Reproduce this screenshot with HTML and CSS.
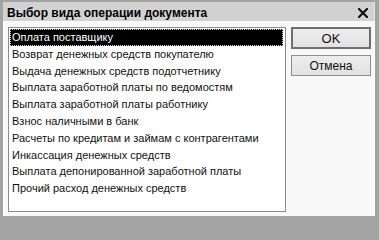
FILE: index.html
```html
<!DOCTYPE html>
<html lang="ru">
<head>
<meta charset="utf-8">
<title>Выбор вида операции документа</title>
<link rel="stylesheet" href="styles.css">
</head>
<body>
<div class="window">
  <div class="titlebar">
    <span class="title">Выбор вида операции документа</span>
    <svg class="close" width="10" height="10" viewBox="0 0 10 10"><path d="M1 1 L9 9 M9 1 L1 9" stroke="#111" stroke-width="2.2" stroke-linecap="square"/></svg>
  </div>
  <div class="content">
    <ul class="list">
      <li class="item selected">Оплата поставщику</li>
      <li class="item">Возврат денежных средств покупателю</li>
      <li class="item">Выдача денежных средств подотчетнику</li>
      <li class="item">Выплата заработной платы по ведомостям</li>
      <li class="item">Выплата заработной платы работнику</li>
      <li class="item">Взнос наличными в банк</li>
      <li class="item">Расчеты по кредитам и займам с контрагентами</li>
      <li class="item">Инкассация денежных средств</li>
      <li class="item">Выплата депонированной заработной платы</li>
      <li class="item">Прочий расход денежных средств</li>
    </ul>
    <div class="buttons">
      <button class="btn default">OK</button>
      <button class="btn">Отмена</button>
    </div>
  </div>
</div>
</body>
</html>
```
FILE: styles.css
```css
html, body {
  margin: 0;
  padding: 0;
  background: #a3a3a3;
}
.window {
  width: 379px;
  height: 221px;
  box-sizing: border-box;
  background: #a3a3a3;
  padding: 2px 4px 5px 3px;
  display: flex;
  flex-direction: column;
  font-family: "Liberation Sans", Arial, sans-serif;
}
.titlebar {
  height: 19px;
  flex: none;
  background: #d2d2d2;
  display: flex;
  align-items: center;
  justify-content: space-between;
  padding: 0 6px 0 4px;
  border-right: 1px solid #e6e6e6;
}
.title {
  font-weight: bold;
  font-size: 12px;
  color: #000;
  padding-top: 2px;
}
.close {
  display: block;
  margin-top: 2px;
}
.content {
  flex: 1;
  background: #f8f8f8;
  border-left: 1px solid #fcfcfc;
  border-right: 1px solid #fcfcfc;
  display: flex;
  align-items: flex-start;
  padding: 6px 4px 0 4px;
  gap: 5px;
}
.list {
  list-style: none;
  margin: 0;
  padding: 1px 1px;
  width: 278px;
  height: 185px;
  flex: none;
  box-sizing: border-box;
  border: 1px solid #8c8c8c;
  background: #fff;
}
.item {
  height: 16.8px;
  line-height: 16.8px;
  font-size: 11px;
  color: #111;
  padding-left: 2px;
  box-sizing: border-box;
  white-space: nowrap;
}
.item.selected {
  background: #000;
  color: #fff;
  border: 1px dotted #d0d0d0;
  line-height: 14.8px;
  padding-left: 1px;
  margin-right: 1px;
}
.buttons {
  display: flex;
  flex-direction: column;
  gap: 6px;
}
.btn {
  width: 80px;
  height: 21px;
  margin: 0;
  padding: 0;
  font-family: "Liberation Sans", Arial, sans-serif;
  font-size: 12px;
  color: #111;
  background: linear-gradient(#ededed, #e2e2e2);
  border: 1px solid #8e8e8e;
  box-sizing: border-box;
}
.btn.default {
  height: 22px;
  border: 2px solid #6e6e6e;
  font-size: 13px;
}
```
